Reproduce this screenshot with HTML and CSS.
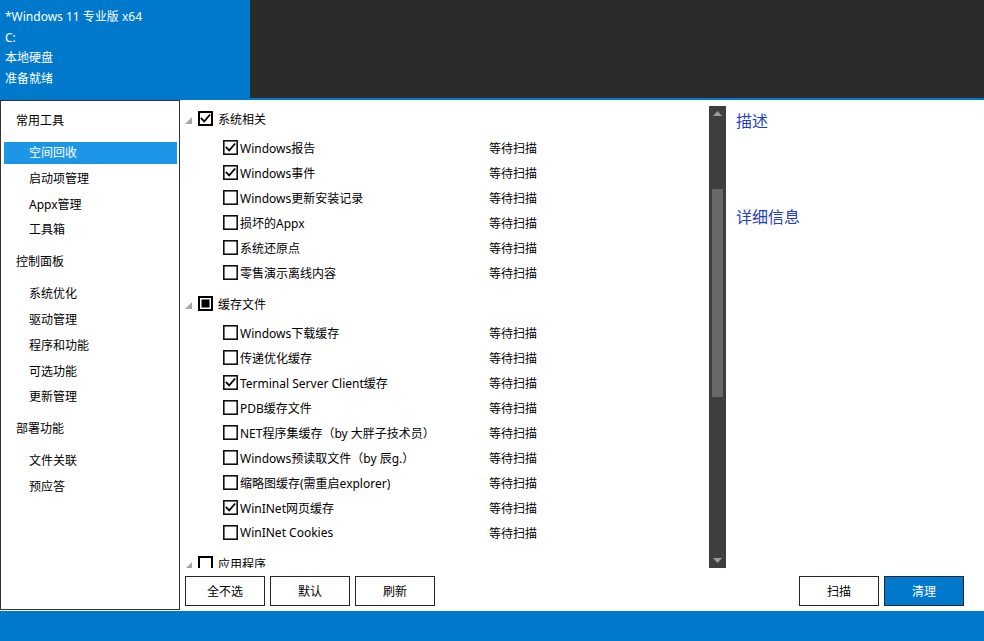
FILE: index.html
```html
<!DOCTYPE html>
<html lang="zh-CN">
<head>
<meta charset="utf-8">
<title>Cleaner</title>
<link rel="stylesheet" href="styles.css">
</head>
<body>
<div class="app">
  <header class="header">
    <div class="info">
      <div>*Windows 11 专业版 x64</div>
      <div>C:</div>
      <div>本地硬盘</div>
      <div>准备就绪</div>
    </div>
    <div class="dark"></div>
  </header>

  <main class="main">
    <nav class="sidebar">
      <section class="nav-group">
        <div class="nav-title">常用工具</div>
        <ul class="nav-list">
          <li class="nav-item active">空间回收</li>
          <li class="nav-item">启动项管理</li>
          <li class="nav-item">Appx管理</li>
          <li class="nav-item">工具箱</li>
        </ul>
      </section>
      <section class="nav-group">
        <div class="nav-title">控制面板</div>
        <ul class="nav-list">
          <li class="nav-item">系统优化</li>
          <li class="nav-item">驱动管理</li>
          <li class="nav-item">程序和功能</li>
          <li class="nav-item">可选功能</li>
          <li class="nav-item">更新管理</li>
        </ul>
      </section>
      <section class="nav-group">
        <div class="nav-title">部署功能</div>
        <ul class="nav-list">
          <li class="nav-item">文件关联</li>
          <li class="nav-item">预应答</li>
        </ul>
      </section>
    </nav>

    <div class="content">
      <div class="upper">
        <div class="tree">
          <div class="group">
            <div class="group-row">
              <svg class="expander" width="7" height="7" viewBox="0 0 7 7"><polygon points="7,0 7,7 0,7"/></svg>
              <svg class="cb cb-group" width="15" height="15" viewBox="0 0 15 15"><rect x="1" y="1" width="13" height="13"/><path class="tick" d="M3.5 7.5 L6.2 10.4 L11.6 4.2"/></svg>
              <span>系统相关</span>
            </div>
            <div class="children">
              <div class="row"><svg class="cb" width="15" height="15" viewBox="0 0 15 15"><rect x="0.8" y="0.8" width="13.4" height="13.4"/><path class="tick" d="M3.5 7.5 L6.2 10.4 L11.6 4.2"/></svg><span>Windows报告</span><span>等待扫描</span></div>
              <div class="row"><svg class="cb" width="15" height="15" viewBox="0 0 15 15"><rect x="0.8" y="0.8" width="13.4" height="13.4"/><path class="tick" d="M3.5 7.5 L6.2 10.4 L11.6 4.2"/></svg><span>Windows事件</span><span>等待扫描</span></div>
              <div class="row"><svg class="cb" width="15" height="15" viewBox="0 0 15 15"><rect x="0.8" y="0.8" width="13.4" height="13.4"/></svg><span>Windows更新安装记录</span><span>等待扫描</span></div>
              <div class="row"><svg class="cb" width="15" height="15" viewBox="0 0 15 15"><rect x="0.8" y="0.8" width="13.4" height="13.4"/></svg><span>损坏的Appx</span><span>等待扫描</span></div>
              <div class="row"><svg class="cb" width="15" height="15" viewBox="0 0 15 15"><rect x="0.8" y="0.8" width="13.4" height="13.4"/></svg><span>系统还原点</span><span>等待扫描</span></div>
              <div class="row"><svg class="cb" width="15" height="15" viewBox="0 0 15 15"><rect x="0.8" y="0.8" width="13.4" height="13.4"/></svg><span>零售演示离线内容</span><span>等待扫描</span></div>
            </div>
          </div>

          <div class="group">
            <div class="group-row">
              <svg class="expander" width="7" height="7" viewBox="0 0 7 7"><polygon points="7,0 7,7 0,7"/></svg>
              <svg class="cb cb-group" width="15" height="15" viewBox="0 0 15 15"><rect x="1" y="1" width="13" height="13"/><rect class="fill" x="3.5" y="3.5" width="8" height="8"/></svg>
              <span>缓存文件</span>
            </div>
            <div class="children">
              <div class="row"><svg class="cb" width="15" height="15" viewBox="0 0 15 15"><rect x="0.8" y="0.8" width="13.4" height="13.4"/></svg><span>Windows下载缓存</span><span>等待扫描</span></div>
              <div class="row"><svg class="cb" width="15" height="15" viewBox="0 0 15 15"><rect x="0.8" y="0.8" width="13.4" height="13.4"/></svg><span>传递优化缓存</span><span>等待扫描</span></div>
              <div class="row"><svg class="cb" width="15" height="15" viewBox="0 0 15 15"><rect x="0.8" y="0.8" width="13.4" height="13.4"/><path class="tick" d="M3.5 7.5 L6.2 10.4 L11.6 4.2"/></svg><span>Terminal Server Client缓存</span><span>等待扫描</span></div>
              <div class="row"><svg class="cb" width="15" height="15" viewBox="0 0 15 15"><rect x="0.8" y="0.8" width="13.4" height="13.4"/></svg><span>PDB缓存文件</span><span>等待扫描</span></div>
              <div class="row"><svg class="cb" width="15" height="15" viewBox="0 0 15 15"><rect x="0.8" y="0.8" width="13.4" height="13.4"/></svg><span>NET程序集缓存（by 大胖子技术员）</span><span>等待扫描</span></div>
              <div class="row"><svg class="cb" width="15" height="15" viewBox="0 0 15 15"><rect x="0.8" y="0.8" width="13.4" height="13.4"/></svg><span>Windows预读取文件（by 辰g.）</span><span>等待扫描</span></div>
              <div class="row"><svg class="cb" width="15" height="15" viewBox="0 0 15 15"><rect x="0.8" y="0.8" width="13.4" height="13.4"/></svg><span>缩略图缓存(需重启explorer)</span><span>等待扫描</span></div>
              <div class="row"><svg class="cb" width="15" height="15" viewBox="0 0 15 15"><rect x="0.8" y="0.8" width="13.4" height="13.4"/><path class="tick" d="M3.5 7.5 L6.2 10.4 L11.6 4.2"/></svg><span>WinINet网页缓存</span><span>等待扫描</span></div>
              <div class="row"><svg class="cb" width="15" height="15" viewBox="0 0 15 15"><rect x="0.8" y="0.8" width="13.4" height="13.4"/></svg><span>WinINet Cookies</span><span>等待扫描</span></div>
            </div>
          </div>

          <div class="group">
            <div class="group-row">
              <svg class="expander" width="7" height="7" viewBox="0 0 7 7"><polygon points="7,0 7,7 0,7"/></svg>
              <svg class="cb cb-group" width="15" height="15" viewBox="0 0 15 15"><rect x="1" y="1" width="13" height="13"/></svg>
              <span>应用程序</span>
            </div>
          </div>
        </div>

        <div class="scrollbar">
          <svg class="arrow" width="9" height="5" viewBox="0 0 9 5"><polygon points="0,5 4.5,0 9,5"/></svg>
          <div class="track"><div class="thumb"></div></div>
          <svg class="arrow" width="9" height="5" viewBox="0 0 9 5"><polygon points="0,0 9,0 4.5,5"/></svg>
        </div>

        <aside class="detail">
          <div class="detail-title">描述</div>
          <div class="detail-title second">详细信息</div>
        </aside>
      </div>

      <div class="actions">
        <div class="btn-group">
          <button class="btn">全不选</button>
          <button class="btn">默认</button>
          <button class="btn">刷新</button>
        </div>
        <div class="btn-group">
          <button class="btn">扫描</button>
          <button class="btn primary">清理</button>
        </div>
      </div>
    </div>
  </main>

  <footer class="footer"></footer>
</div>
</body>
</html>
```

FILE: styles.css
```css
* { box-sizing: border-box; }

html, body {
  margin: 0;
  padding: 0;
  width: 984px;
  height: 641px;
  overflow: hidden;
  background: #ffffff;
  font-family: "Noto Sans", "Noto Sans CJK SC", sans-serif;
  font-size: 12px;
  color: #000;
}

.app {
  display: flex;
  flex-direction: column;
  width: 984px;
  height: 641px;
}

.header {
  height: 100px;
  flex: none;
  background: #0079cc;
  display: flex;
  align-items: flex-start;
}

.info {
  width: 250px;
  padding: 7px 0 0 5px;
  color: #fff;
  line-height: 20.5px;
}

.dark {
  flex: 1;
  height: 98px;
  background: #2b2b2b;
}

.main {
  flex: none;
  height: 511px;
  display: flex;
}

.sidebar {
  width: 180px;
  height: 510px;
  border: 1px solid #333;
  padding-top: 4px;
}

.nav-group + .nav-group { margin-top: 5px; }

.nav-title {
  height: 31px;
  line-height: 31px;
  padding-left: 15px;
}

.nav-list {
  list-style: none;
  margin: 0;
  padding: 6px 0 0 0;
}

.nav-item {
  height: 22px;
  line-height: 22px;
  margin: 0 2px 3.75px 3px;
  padding-left: 25px;
}

.nav-item.active {
  background: #1e96e8;
  color: #fff;
}

.content {
  flex: 1;
  display: flex;
  flex-direction: column;
}

.upper {
  height: 468px;
  display: flex;
}

.tree {
  width: 529px;
  height: 468px;
  overflow: hidden;
  padding: 6px 0 0 5px;
}

.group + .group { margin-top: 6px; }

.group-row {
  height: 25px;
  display: flex;
  align-items: center;
}

.expander {
  fill: #a6a6a6;
  margin: 3px 6px 0 0;
}

.cb { flex: none; display: block; }
.cb rect { fill: #fff; stroke: #111; stroke-width: 1.6; }
.cb-group rect { stroke-width: 2; stroke: #000; }
.cb rect.fill { fill: #000; stroke: none; }
.cb .tick { fill: none; stroke: #000; stroke-width: 1.8; stroke-linecap: square; }

.group-row span { margin-left: 5px; }

.children { padding-top: 4px; }

.row {
  height: 25px;
  display: grid;
  grid-template-columns: 15px 247px auto;
  column-gap: 2px;
  align-items: center;
  padding-left: 38px;
}

.scrollbar {
  width: 17px;
  margin-top: 6px;
  background: #3e3d42;
  display: flex;
  flex-direction: column;
  align-items: center;
}

.arrow {
  fill: #9a9a9a;
  flex: none;
  margin: 5px 0;
}

.track {
  flex: 1;
  width: 100%;
  padding: 68px 3px 0 3px;
}

.thumb {
  height: 208px;
  background: #686868;
}

.detail {
  flex: 1;
  padding: 10px 0 0 10px;
}

.detail-title {
  font-size: 16px;
  line-height: 22px;
  color: #1f3fbf;
}

.detail-title.second { margin-top: 74px; }

.actions {
  display: flex;
  justify-content: space-between;
  padding: 8px 20px 0 5px;
}

.btn-group {
  display: flex;
  gap: 5px;
}

.btn {
  width: 80px;
  height: 30px;
  border: 1px solid #262626;
  background: #fff;
  color: #000;
  font-family: inherit;
  font-size: 12px;
  padding: 0;
  margin: 0;
}

.btn.primary {
  background: #0079cc;
  color: #fff;
  border-color: #1e2a36;
}

.footer {
  flex: none;
  height: 30px;
  background: #0079cc;
}
```
